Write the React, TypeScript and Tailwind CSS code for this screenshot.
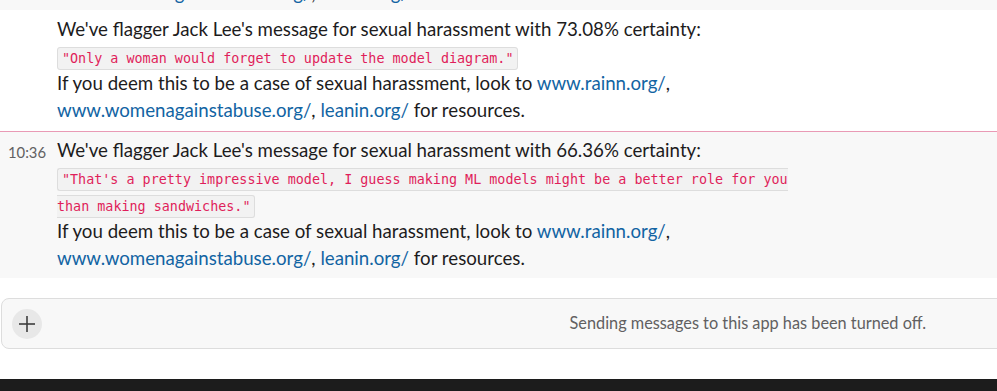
import React from 'react';

const Code: React.FC<{ children: React.ReactNode }> = ({ children }) => (
    <code className="font-['DejaVu_Sans_Mono',monospace] text-[13.4px] leading-[18px] text-[#e01e5a] bg-[#f2f2f2] border border-[#dddddd] rounded-[3px] px-[4px] py-[3px]">
        {children}
    </code>
);

const Links: React.FC = () => (
    <>
        If you deem this to be a case of sexual harassment, look to <a className="text-[#1264a3]">www.rainn.org/</a>,
        <br />
        <a className="text-[#1264a3]">www.womenagainstabuse.org/</a>, <a className="text-[#1264a3]">leanin.org/</a> for resources.
    </>
);

const App: React.FC = () => {
    return (
        <div className="w-[997px] h-[391px] overflow-hidden bg-white flex flex-col font-['Lato',sans-serif] text-[#1d1c1d]">
            {/* tail of previous message */}
            <div className="h-[10px] shrink-0 overflow-hidden bg-[#f8f8f8] flex flex-col justify-end pb-[3px] pl-[57px] text-[18.7px] leading-[27px]">
                <div className="whitespace-nowrap">
                    <a className="text-[#1264a3]">www.womenagainstabuse.org/</a>, <a className="text-[#1264a3]">leanin.org/</a> for resources.
                </div>
            </div>

            <div className="shrink-0 bg-white pt-[6px] pb-[7px] pl-[57px] pr-4 text-[18.7px] leading-[27px]">
                We've flagger Jack Lee's message for sexual harassment with 73.08% certainty:
                <br />
                <Code>"Only a woman would forget to update the model diagram."</Code>
                <br />
                <Links />
            </div>

            <div className="shrink-0 h-px bg-[#e99ab5]" />

            <div className="shrink-0 bg-[#f8f8f8] pt-[5px] pb-[6px] flex text-[18.7px] leading-[27px]">
                <div className="w-[57px] shrink-0 pl-[8px] pt-[2px] text-[14.8px] leading-[27px] text-[#616061]">10:36</div>
                <div className="w-[745px]">
                    We've flagger Jack Lee's message for sexual harassment with 66.36% certainty:
                    <br />
                    <Code>"That's a pretty impressive model, I guess making ML models might be a better role for you than making sandwiches."</Code>
                    <br />
                    <Links />
                </div>
            </div>

            <div className="shrink-0 pt-[20px]">
                <div className="ml-[1px] -mr-[10px] h-[51px] border border-[#dddddd] rounded-[8px] bg-[#f8f8f8] flex items-center justify-between pl-[10px] pr-[80px]">
                    <div className="w-[30px] h-[30px] rounded-full bg-[#e8e8e8] flex items-center justify-center">
                        <svg width="18" height="18" viewBox="0 0 18 18" fill="none" stroke="#3d3d3d" strokeWidth="1.6">
                            <line x1="9" y1="1" x2="9" y2="17" />
                            <line x1="1" y1="9" x2="17" y2="9" />
                        </svg>
                    </div>
                    <span className="text-[16.3px] text-[#616061]">Sending messages to this app has been turned off.</span>
                </div>
            </div>

            <div className="flex-1" />
            <div className="shrink-0 h-[12px] bg-[#1c1c1c]" />
        </div>
    );
};

export default App;
